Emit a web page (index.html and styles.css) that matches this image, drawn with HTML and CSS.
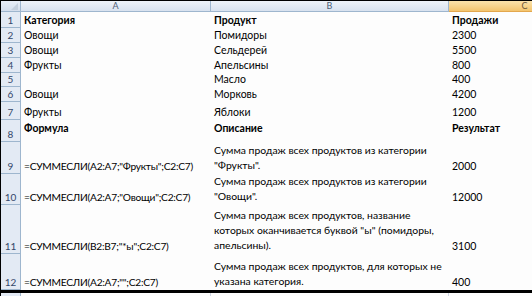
FILE: index.html
```html
<!DOCTYPE html>
<html lang="ru">
<head>
<meta charset="utf-8">
<link rel="stylesheet" href="styles.css">
</head>
<body>
<div class="sheet">
  <div class="corner"><span class="tri"></span></div>
  <div class="colhead">A</div>
  <div class="colhead">B</div>
  <div class="colhead sel">C</div>

  <div class="rn">1</div><div class="c b">Категория</div><div class="c b">Продукт</div><div class="c b">Продажи</div>
  <div class="rn">2</div><div class="c">Овощи</div><div class="c">Помидоры</div><div class="c">2300</div>
  <div class="rn">3</div><div class="c">Овощи</div><div class="c">Сельдерей</div><div class="c">5500</div>
  <div class="rn">4</div><div class="c">Фрукты</div><div class="c">Апельсины</div><div class="c">800</div>
  <div class="rn">5</div><div class="c"></div><div class="c">Масло</div><div class="c">400</div>
  <div class="rn">6</div><div class="c">Овощи</div><div class="c">Морковь</div><div class="c">4200</div>
  <div class="rn">7</div><div class="c">Фрукты</div><div class="c">Яблоки</div><div class="c">1200</div>
  <div class="rn">8</div><div class="c b top">Формула</div><div class="c b top">Описание</div><div class="c b top">Результат</div>
  <div class="rn">9</div><div class="c f">=СУММЕСЛИ(A2:A7;"Фрукты";C2:C7)</div><div class="c d"><span class="ln">Сумма продаж всех продуктов из категории</span><span class="ln">"Фрукты".</span></div><div class="c">2000</div>
  <div class="rn">10</div><div class="c f">=СУММЕСЛИ(A2:A7;"Овощи";C2:C7)</div><div class="c d"><span class="ln">Сумма продаж всех продуктов из категории</span><span class="ln">"Овощи".</span></div><div class="c">12000</div>
  <div class="rn">11</div><div class="c f">=СУММЕСЛИ(B2:B7;"*ы";C2:C7)</div><div class="c d"><span class="ln">Сумма продаж всех продуктов, название</span><span class="ln">которых оканчивается буквой "ы" (помидоры,</span><span class="ln">апельсины).</span></div><div class="c">3100</div>
  <div class="rn">12</div><div class="c f">=СУММЕСЛИ(A2:A7;"";C2:C7)</div><div class="c d"><span class="ln">Сумма продаж всех продуктов, для которых не</span><span class="ln">указана категория.</span></div><div class="c">400</div>

  <div class="thick"></div>
  <div class="rn last"></div><div class="c grid"></div><div class="c grid"></div><div class="c"></div>
</div>
</body>
</html>
```

FILE: styles.css
```css
html, body {
  margin: 0;
  padding: 0;
  background: #ffffff;
  overflow: hidden;
}

.sheet {
  width: 531px;
  height: 295px;
  overflow: hidden;
  border-top: 1px solid #000;
  border-left: 1px solid #000;
  display: grid;
  grid-template-columns: 20px 190px 238px 152px;
  grid-template-rows: 11px 16px 15px 15px 15px 14px 15px 18px 22px 32px 31px 49px 36px 3px 10px;
  font-family: Lato, "Open Sans", sans-serif;
  font-size: 10.5px;
  color: #000;
  background: #fdfdfd;
}

.corner {
  background: linear-gradient(#e8eef7, #d4deec);
  border-right: 1px solid #9eb6ce;
  border-bottom: 1px solid #9eb6ce;
  box-sizing: border-box;
  position: relative;
}

.tri {
  position: absolute;
  right: 2px;
  bottom: 1px;
  width: 0;
  height: 0;
  border-left: 7px solid transparent;
  border-bottom: 7px solid #c4cfdd;
}

.colhead {
  background: linear-gradient(#eef3f9, #d8e2ef);
  border-right: 1px solid #9eb6ce;
  border-bottom: 1px solid #9eb6ce;
  box-sizing: border-box;
  display: flex;
  align-items: center;
  justify-content: center;
  font-size: 9px;
  line-height: 10px;
  color: #4c5d75;
}

.colhead.sel {
  background: linear-gradient(#fbe3ac, #f3c46e);
  border-bottom-color: #e3a74d;
  color: #6e5a3a;
}

.rn {
  background: #e3eaf4;
  border-right: 1px solid #9eb6ce;
  border-bottom: 1px solid #9eb6ce;
  box-sizing: border-box;
  display: flex;
  align-items: flex-end;
  justify-content: center;
  font-size: 10px;
  line-height: 13px;
  color: #34476a;
}

.c {
  display: flex;
  flex-direction: column;
  justify-content: flex-end;
  padding: 0 2px 0 3px;
  line-height: 15px;
  overflow: hidden;
  min-width: 0;
}

.c.b {
  font-weight: bold;
}

.c.top {
  justify-content: flex-start;
  padding-top: 1px;
}

.c.f {
  font-size: 10.2px;
  letter-spacing: -0.25px;
  white-space: nowrap;
  overflow: visible;
}

.c.d {
  font-size: 10.4px;
  padding-right: 0;
  padding-bottom: 1px;
}

.ln {
  display: block;
  white-space: nowrap;
}

.thick {
  grid-column: 1 / -1;
  background: #000;
}

.rn.last {
  border-bottom: none;
}

.c.grid {
  border-right: 1px solid #d0d7e5;
}
```
